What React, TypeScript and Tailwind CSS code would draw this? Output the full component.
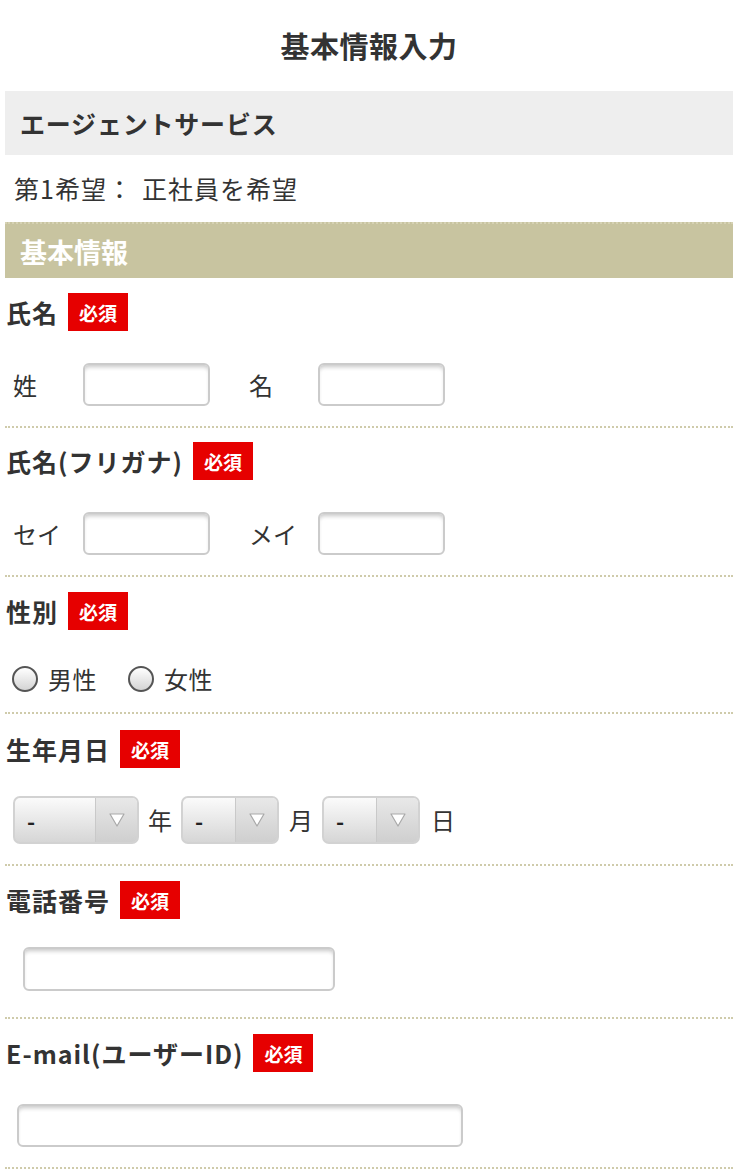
import React from "react";

const Badge = () => (
  <span className="ml-[10px] inline-flex h-[38px] w-[60px] items-center justify-center bg-[#e60000] text-[19px] font-bold leading-none tracking-normal text-white">
    必須
  </span>
);

const Label = ({ text }: { text: string }) => (
  <div className="flex h-[38px] items-center pl-[1px]">
    <span className="text-[25px] font-bold leading-none tracking-[1px] text-[#333]">{text}</span>
    <Badge />
  </div>
);

const TextInput = ({ w, h = 43 }: { w: string; h?: number }) => (
  <div
    className={`${w} rounded-[6px] border-2 border-[#cbcbcb] bg-white shadow-[inset_0_4px_4px_-2px_rgba(0,0,0,0.22)]`}
    style={{ height: h }}
  />
);

const Arrow = () => (
  <svg width="16" height="14" viewBox="0 0 16 14">
    <path d="M1 1 L15 1 L8 13 Z" fill="#ffffff" stroke="#a9a9a9" strokeWidth="1.2" strokeLinejoin="round" />
  </svg>
);

const Select = ({ w, arrowW }: { w: string; arrowW: string }) => (
  <div className={`${w} flex h-[48px] overflow-hidden rounded-[7px] border-2 border-[#d2d2d2] bg-gradient-to-b from-[#fbfbfb] to-[#d6d6d6]`}>
    <div className="flex flex-1 items-center pl-[12px] text-[22px] font-bold leading-none text-[#222]">-</div>
    <div className={`${arrowW} flex items-center justify-center border-l border-[#c9c9c9] bg-gradient-to-b from-[#e8e8e8] to-[#cfcfcf]`}>
      <Arrow />
    </div>
  </div>
);

const Radio = ({ label }: { label: string }) => (
  <div className="flex items-center">
    <span className="h-[26px] w-[26px] rounded-full border-2 border-[#555] bg-gradient-to-b from-[#ffffff] to-[#d4d4d4]" />
    <span className="ml-[10px] text-[24px] leading-none tracking-[0.5px] text-[#333]">{label}</span>
  </div>
);

export default function App() {
  return (
    <div
      className="w-[744px] bg-white text-[#333]"
      style={{ fontFamily: '"Noto Sans CJK JP", "Noto Sans", sans-serif' }}
    >
      <h1 className="flex h-[91px] items-center justify-center pl-[5px] pr-[11px] text-[29px] font-bold leading-none tracking-[0.5px] text-[#333]">
        基本情報入力
      </h1>
      <div className="ml-[5px] w-[728px]">
        <div className="flex h-[64px] items-center bg-[#eeeeee] pl-[15px] text-[25px] font-bold leading-none tracking-[0.8px]">
          エージェントサービス
        </div>
        <div className="flex h-[67px] items-center pl-[9px] text-[25px] leading-none tracking-[1px]">
          <span>第1希望：</span>
          <span className="ml-[9px]">正社員を希望</span>
        </div>
        <div className="flex h-[56px] items-center border-t-2 border-dotted border-[#d6d2b4] bg-[#c8c4a0] pl-[15px] text-[27px] font-bold leading-none text-white">
          基本情報
        </div>

        {/* 氏名 */}
        <div className="border-b-2 border-dotted border-[#cfcbab] pt-[15px] pb-[20px]">
          <Label text="氏名" />
          <div className="mt-[32px] flex items-center pl-[8px]">
            <span className="w-[70px] text-[24px] leading-none">姓</span>
            <TextInput w="w-[127px]" />
            <span className="ml-[39px] w-[69px] text-[24px] leading-none">名</span>
            <TextInput w="w-[127px]" />
          </div>
        </div>

        {/* 氏名(フリガナ) */}
        <div className="border-b-2 border-dotted border-[#cfcbab] pt-[14px] pb-[20px]">
          <Label text="氏名(フリガナ)" />
          <div className="mt-[32px] flex items-center pl-[8px]">
            <span className="w-[70px] text-[24px] leading-none">セイ</span>
            <TextInput w="w-[127px]" />
            <span className="ml-[39px] w-[69px] text-[24px] leading-none">メイ</span>
            <TextInput w="w-[127px]" />
          </div>
        </div>

        {/* 性別 */}
        <div className="border-b-2 border-dotted border-[#cfcbab] pt-[15px] pb-[20px]">
          <Label text="性別" />
          <div className="mt-[36px] flex h-[26px] items-center gap-[31px] pl-[7px]">
            <Radio label="男性" />
            <Radio label="女性" />
          </div>
        </div>

        {/* 生年月日 */}
        <div className="border-b-2 border-dotted border-[#cfcbab] pt-[16px] pb-[20px]">
          <Label text="生年月日" />
          <div className="mt-[28px] flex items-center pl-[8px]">
            <Select w="w-[126px]" arrowW="w-[42px]" />
            <span className="mx-[9px] text-[24px] leading-none">年</span>
            <Select w="w-[98px]" arrowW="w-[42px]" />
            <span className="ml-[10px] mr-[9px] text-[24px] leading-none">月</span>
            <Select w="w-[98px]" arrowW="w-[42px]" />
            <span className="ml-[11px] text-[24px] leading-none">日</span>
          </div>
        </div>

        {/* 電話番号 */}
        <div className="border-b-2 border-dotted border-[#cfcbab] pt-[15px] pb-[26px]">
          <Label text="電話番号" />
          <div className="mt-[28px] pl-[18px]">
            <TextInput w="w-[312px]" h={44} />
          </div>
        </div>

        {/* E-mail */}
        <div className="border-b-2 border-dotted border-[#cfcbab] pt-[15px] pb-[20px]">
          <Label text="E-mail(ユーザーID)" />
          <div className="mt-[32px] pl-[12px]">
            <TextInput w="w-[446px]" />
          </div>
        </div>
      </div>
    </div>
  );
}
